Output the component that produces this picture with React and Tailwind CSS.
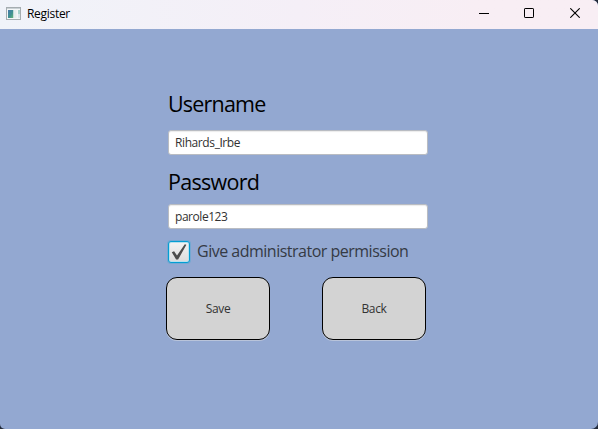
function TitleBar() {
  return (
    <header className="flex h-[29px] shrink-0 items-center bg-gradient-to-r from-[#f0f3f9] via-[#f5eff7] via-50% to-[#f8eef4] to-80% pl-[6px]">
      <svg width="16" height="14" viewBox="0 0 16 14" className="mb-[2px] shrink-0">
        <defs>
          <linearGradient id="pane" x1="0" y1="0" x2="1" y2="1">
            <stop offset="0" stopColor="#4779ad" />
            <stop offset="0.55" stopColor="#3f9190" />
            <stop offset="1" stopColor="#69b878" />
          </linearGradient>
        </defs>
        <rect x="0.5" y="0.5" width="14" height="12" fill="#f4f7f7" stroke="#a5adb0" />
        <rect x="1" y="1" width="13" height="1" fill="#c9d0d4" />
        <rect x="2" y="3" width="5.5" height="8" fill="url(#pane)" />
        <rect x="7.5" y="3" width="3" height="8" fill="#e6eeee" />
        <rect x="12" y="3" width="2" height="4" fill="#a8d3cc" />
        <rect x="12" y="7" width="2" height="4" fill="#dbe6ec" />
      </svg>
      <span className="-mt-[2px] ml-[5px] text-[12px] leading-4 tracking-[-0.3px] text-black">Register</span>
      <div className="ml-auto flex h-full items-center">
        <button aria-label="Minimize" className="flex h-full w-[45px] items-center justify-center">
          <svg width="10" height="10" viewBox="0 0 10 10" className="mb-[3px]">
            <path d="M0 5.5H10" stroke="#000" />
          </svg>
        </button>
        <button aria-label="Maximize" className="flex h-full w-[46px] items-center justify-center">
          <svg width="10" height="10" viewBox="0 0 10 10" className="mb-[3px]">
            <rect x="0.5" y="0.5" width="9" height="9" rx="0.6" fill="none" stroke="#000" />
          </svg>
        </button>
        <button aria-label="Close" className="flex h-full w-[46px] items-center justify-center">
          <svg width="10" height="10" viewBox="0 0 10 10" className="mb-[3px]">
            <path d="M0.3 0.3L9.7 9.7M9.7 0.3L0.3 9.7" stroke="#000" strokeWidth="1.1" />
          </svg>
        </button>
      </div>
    </header>
  );
}

function Field({ children }) {
  return (
    <div className="flex h-[25px] w-[260px] items-center rounded-[3px] border border-[#b9bcc2] bg-white pl-[6px] text-[12px] leading-4 text-[#323232] shadow-[inset_0_1px_1px_#ececec]">
      {children}
    </div>
  );
}

function ActionButton({ children }) {
  return (
    <button className="h-[63px] w-[104px] rounded-[11px] border border-black bg-[#d3d3d3] text-[12px] leading-4 tracking-[-0.35px] text-[#323232] shadow-[0_1px_0_#b9c4da]">
      {children}
    </button>
  );
}

export default function App() {
  return (
    <div className="h-[429px] w-[598px] bg-[#222a3a]">
      <div className="flex h-full flex-col overflow-hidden rounded-tr-[6px] rounded-br-[7px] rounded-bl-[5px] bg-[#93a8d1] font-['Open_Sans','Noto_Sans',sans-serif]">
        <TitleBar />
        <main className="flex flex-col pl-[168px] pt-[59px]">
          <label className="h-[42px] text-[21.5px] leading-[32px] tracking-[-0.8px] text-black">
            Username
          </label>
          <Field>
            <span className="tracking-[-0.4px]">
              Rihards_<span className="font-['Roboto']">I</span>rbe
            </span>
          </Field>
          <label className="mt-[11px] h-[38px] text-[21.5px] leading-[32px] tracking-[-0.7px] text-black">
            Password
          </label>
          <Field>
            <span className="tracking-[-0.45px]">parole123</span>
          </Field>
          <label className="mt-3 flex h-[22px] items-center">
            <span className="flex size-[22px] items-center justify-center rounded-[3px] border border-[#039ed3] bg-gradient-to-b from-[#f3f3f3] to-[#dcdcdc] shadow-[0_0_0_1px_#55a8d380,inset_0_0_0_1px_#b8e0ee]">
              <svg width="16" height="16" viewBox="0 0 16 16">
                <path d="M0.8 8.2L3.1 7.2L6 11.4L13.8 0.3L15.4 0.8L7.1 15.5H5.1Z" fill="#4c4c4c" />
              </svg>
            </span>
            <span className="-mt-[2px] ml-[7px] text-[16px] leading-[22px] tracking-[-0.5px] text-[#353a44]">
              Give administrator permission
            </span>
          </label>
          <div className="-ml-[2px] mt-[14px] flex gap-[52px]">
            <ActionButton>Save</ActionButton>
            <ActionButton>Back</ActionButton>
          </div>
        </main>
      </div>
    </div>
  );
}
